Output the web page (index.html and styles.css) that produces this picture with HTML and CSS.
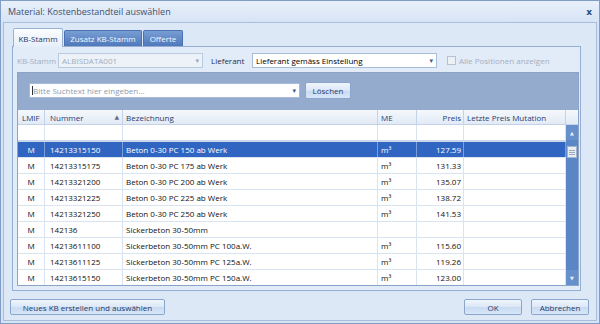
FILE: index.html
```html
<!DOCTYPE html>
<html lang="de">
<head>
<meta charset="utf-8">
<title>Material: Kostenbestandteil auswählen</title>
<link rel="stylesheet" href="styles.css">
</head>
<body>
<div class="window">
  <div class="titlebar">
    <span class="title">Material: Kostenbestandteil auswählen</span>
    <span class="close">x</span>
  </div>
  <div class="client">
    <div class="tabs">
      <div class="tab active w1">KB-Stamm</div>
      <div class="tab w2">Zusatz KB-Stamm</div>
      <div class="tab w3">Offerte</div>
    </div>
    <div class="page">
      <div class="toolbar">
        <span class="lbl dis lbl1">KB-Stamm</span>
        <div class="combo disabled c1"><span>ALBISDATA001</span><span class="arrow">▾</span></div>
        <span class="lbl lbl2">Lieferant</span>
        <div class="combo c2"><span>Lieferant gemäss Einstellung</span><span class="arrow dark">▾</span></div>
        <span class="check"></span>
        <span class="lbl dis">Alle Positionen anzeigen</span>
      </div>
      <div class="gridwrap">
        <div class="searchpanel">
          <div class="search"><span class="caret"></span><span class="ph">Bitte Suchtext hier eingeben...</span><span class="arrow dark">▾</span></div>
          <div class="btn loeschen">Löschen</div>
        </div>
        <div class="gridbody">
          <div class="cols">
            <div class="row head">
              <div class="cell">LMIF</div>
              <div class="cell sort">Nummer<span class="sortarrow">▲</span></div>
              <div class="cell">Bezeichnung</div>
              <div class="cell">ME</div>
              <div class="cell r">Preis</div>
              <div class="cell">Letzte Preis Mutation</div>
            </div>
            <div class="row filter">
              <div class="cell"></div><div class="cell"></div><div class="cell"></div><div class="cell"></div><div class="cell"></div><div class="cell"></div>
            </div>
            <div class="row sel">
              <div class="cell c">M</div><div class="cell">14213315150</div><div class="cell">Beton 0-30 PC 150 ab Werk</div><div class="cell">m³</div><div class="cell r">127.59</div><div class="cell"></div>
            </div>
            <div class="row">
              <div class="cell c">M</div><div class="cell">14213315175</div><div class="cell">Beton 0-30 PC 175 ab Werk</div><div class="cell">m³</div><div class="cell r">131.33</div><div class="cell"></div>
            </div>
            <div class="row">
              <div class="cell c">M</div><div class="cell">14213321200</div><div class="cell">Beton 0-30 PC 200 ab Werk</div><div class="cell">m³</div><div class="cell r">135.07</div><div class="cell"></div>
            </div>
            <div class="row">
              <div class="cell c">M</div><div class="cell">14213321225</div><div class="cell">Beton 0-30 PC 225 ab Werk</div><div class="cell">m³</div><div class="cell r">138.72</div><div class="cell"></div>
            </div>
            <div class="row">
              <div class="cell c">M</div><div class="cell">14213321250</div><div class="cell">Beton 0-30 PC 250 ab Werk</div><div class="cell">m³</div><div class="cell r">141.53</div><div class="cell"></div>
            </div>
            <div class="row">
              <div class="cell c">M</div><div class="cell">142136</div><div class="cell">Sickerbeton 30-50mm</div><div class="cell"></div><div class="cell r"></div><div class="cell"></div>
            </div>
            <div class="row">
              <div class="cell c">M</div><div class="cell">14213611100</div><div class="cell">Sickerbeton 30-50mm PC 100a.W.</div><div class="cell">m³</div><div class="cell r">115.60</div><div class="cell"></div>
            </div>
            <div class="row">
              <div class="cell c">M</div><div class="cell">14213611125</div><div class="cell">Sickerbeton 30-50mm PC 125a.W.</div><div class="cell">m³</div><div class="cell r">119.26</div><div class="cell"></div>
            </div>
            <div class="row">
              <div class="cell c">M</div><div class="cell">14213615150</div><div class="cell">Sickerbeton 30-50mm PC 150a.W.</div><div class="cell">m³</div><div class="cell r">123.00</div><div class="cell"></div>
            </div>
          </div>
          <div class="vscroll">
            <div class="corner"></div>
            <div class="track">
              <div class="sbtn">▲</div>
              <div class="thumb"><span></span><span></span><span></span></div>
              <div class="spacer"></div>
              <div class="sbtn">▼</div>
            </div>
          </div>
        </div>
      </div>
    </div>
    <div class="footer">
      <div class="btn neu">Neues KB erstellen und auswählen</div>
      <div class="spacer"></div>
      <div class="btn ok">OK</div>
      <div class="btn abbr">Abbrechen</div>
    </div>
  </div>
</div>
</body>
</html>
```
FILE: styles.css
```css
html, body { margin: 0; padding: 0; }
body {
  width: 600px; height: 324px; overflow: hidden;
  font-family: "Open Sans", "Noto Sans", sans-serif;
  font-size: 8px;
  background: #ffffff;
}
.window {
  width: 600px; height: 324px; box-sizing: border-box;
  border: 1px solid #7f9dc6;
  background: #d6e3f4;
  display: flex; flex-direction: column;
}
.titlebar {
  height: 21px; flex: none;
  display: flex; align-items: center; justify-content: space-between;
  padding: 0 7px 0 7px;
  background: linear-gradient(#e8f0fa, #d7e4f5);
  color: #3e4f6e; font-size: 9px;
}
.close { font-weight: bold; color: #2c4a78; font-size: 9px; font-family: "DejaVu Sans", sans-serif; }
.client {
  flex: 1; margin: 0 2px 2px 2px;
  border: 1px solid #a8bedb;
  background: #dde8f6;
  display: flex; flex-direction: column;
}
.tabs { display: flex; margin: 5px 0 0 9px; height: 18px; align-items: flex-end; }
.tab {
  height: 16px; box-sizing: border-box;
  border: 1px solid #4a72b2; border-bottom: none;
  border-radius: 2px 2px 0 0;
  display: flex; align-items: center; justify-content: center;
  color: #f2f6fc;
  background: linear-gradient(#789dd4, #4f79bc);
  margin-right: 1px;
}
.tab.active {
  height: 19px; margin-bottom: -1px; position: relative; z-index: 1;
  background: linear-gradient(#fbfdff, #e6eef9);
  border-color: #98b1d3; color: #1a3766;
}
.w1 { width: 50px; }
.w2 { width: 78px; }
.w3 { width: 40px; }

.page {
  margin-left: 8px; width: 569px; height: 245px; box-sizing: border-box;
  border: 1px solid #95aed2;
  background: #e2ebf8;
  padding: 6px 0 4px 4px;
  display: flex; flex-direction: column;
}
.toolbar { display: flex; align-items: center; height: 15px; flex: none; }
.lbl { color: #1e2f4a; white-space: nowrap; }
.lbl.dis { color: #a4b0c1; }
.lbl1 { width: 41px; }
.lbl2 { width: 41px; margin-left: 8px; }
.combo {
  height: 15px; box-sizing: border-box;
  border: 1px solid #a8bdd9; background: #ffffff;
  display: flex; align-items: center; justify-content: space-between;
  padding: 0 3px 0 3px; color: #000;
}
.combo.disabled { background: #edf2f9; border-color: #b9c9de; color: #a2acbc; }
.c1 { width: 145px; }
.c2 { width: 185px; }
.arrow { font-size: 7px; color: #9aa6b8; font-family: "DejaVu Sans", sans-serif; }
.arrow.dark { color: #3a5a8c; }
.check {
  width: 9px; height: 9px; box-sizing: border-box;
  border: 1px solid #b3c1d4; background: #edf1f6;
  margin: 0 3px 0 10px;
}

.gridwrap {
  margin-top: 4px; width: 562px; flex: 1; box-sizing: border-box;
  border: 1px solid #8aa4c9;
  display: flex; flex-direction: column; overflow: hidden;
  background: #ffffff;
}
.searchpanel {
  height: 37px; flex: none; box-sizing: border-box;
  background: #95abcd;
  display: flex; align-items: flex-start;
  padding: 10px 0 0 11px;
}
.search {
  width: 271px; height: 15px; box-sizing: border-box;
  border: 1px solid #a5bbd9; background: #ffffff;
  display: flex; align-items: center; padding: 0 3px 0 2px;
}
.caret { width: 1px; height: 9px; background: #333; margin-right: 0; }
.ph { color: #8d9bb0; flex: 1; }
.btn {
  height: 16px; box-sizing: border-box;
  border: 1px solid #8aa6cd; border-radius: 2px;
  background: linear-gradient(#f0f5fc, #dbe7f7 50%, #c8daf2 51%, #d8e6f8);
  color: #1f3c68;
  display: flex; align-items: center; justify-content: center;
  white-space: nowrap;
}
.loeschen { width: 46px; height: 17px; margin: -1px 0 0 5px; }

.gridbody { flex: 1; display: flex; overflow: hidden; }
.cols { width: 548px; flex: none; }
.row {
  display: grid;
  grid-template-columns: 27px 78px 255px 39px 47px 102px;
  height: 16px; box-sizing: border-box;
  border-bottom: 1px solid #dae4f1;
}
.cell {
  border-right: 1px solid #dae4f1;
  padding: 0 3px; display: flex; align-items: center;
  white-space: nowrap; overflow: hidden; color: #101010;
}
.row .cell:nth-child(2) { padding-left: 5px; }
.cell.c { justify-content: center; }
.cell.r { justify-content: flex-end; padding-right: 2px; }
.row.head {
  height: 15px;
  background: linear-gradient(#f5f8fc, #e2eaf6);
  border-bottom: 1px solid #c3d2e6;
}
.row.head .cell { color: #1e3f74; border-right-color: #c3d2e6; }
.row.head .cell:first-child { padding-left: 4px; }
.cell.sort { position: relative; }
.sortarrow {
  position: absolute; right: 3px; top: 3px;
  font-size: 6px; color: #5b6f8e; font-family: "DejaVu Sans", sans-serif;
}
.row.filter { height: 17px; border-bottom: 2px solid #c9d7ea; }
.row.sel { background: #3165c2; }
.row.sel .cell { color: #ffffff; border-right-color: #7b9ed9; }

.vscroll { width: 12px; flex: none; display: flex; flex-direction: column; }
.corner {
  height: 15px; flex: none; box-sizing: border-box;
  background: linear-gradient(#f5f8fc, #e2eaf6);
  border-bottom: 1px solid #c3d2e6;
}
.track {
  flex: 1; background: #5b86c6;
  display: flex; flex-direction: column; align-items: center;
}
.sbtn {
  width: 12px; height: 15px; flex: none;
  display: flex; align-items: center; justify-content: center;
  color: #e8eef8; font-size: 5px; font-family: "DejaVu Sans", sans-serif;
  background: #6590cc;
}
.thumb {
  width: 10px; height: 12px; margin-top: 6px; box-sizing: border-box;
  border: 1px solid #a5b4c9; background: #e8edf4;
  display: flex; flex-direction: column; justify-content: center; align-items: center; gap: 1px;
}
.thumb span { width: 6px; height: 1px; background: #9aaac0; }
.track .spacer { flex: 1; }

.footer {
  display: flex; align-items: center;
  margin-top: 8px; padding: 0 7px 0 6px;
}
.footer .spacer { flex: 1; }
.neu { width: 155px; }
.ok { width: 58px; margin-right: 9px; }
.abbr { width: 58px; }
```
